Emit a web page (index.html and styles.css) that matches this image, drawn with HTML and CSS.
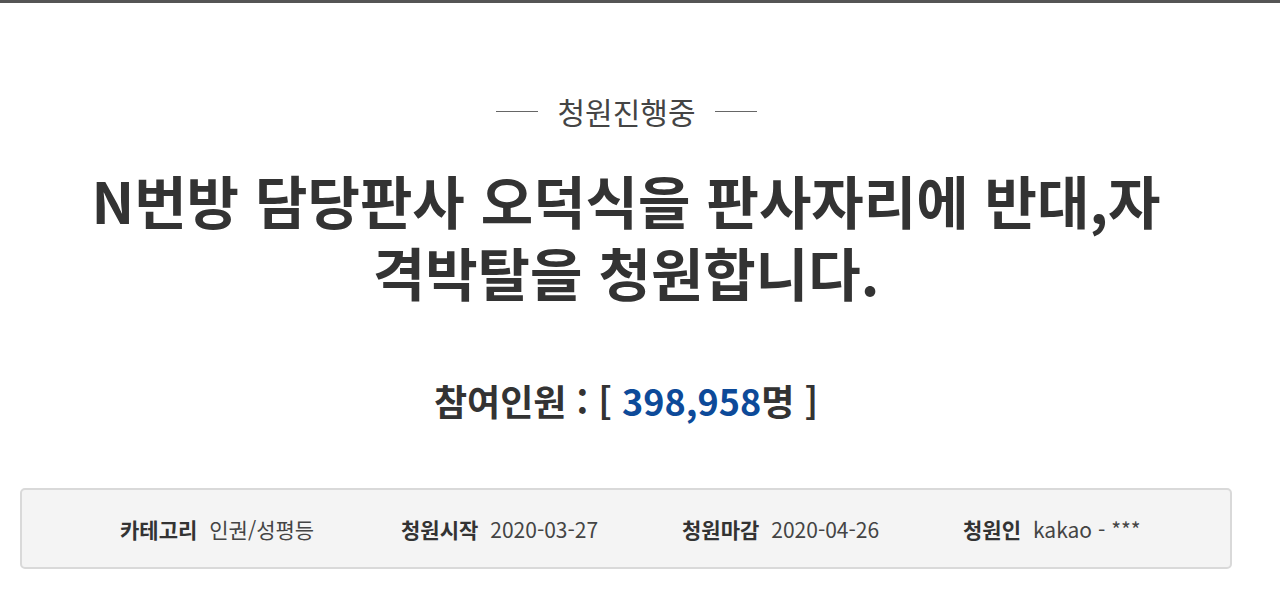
FILE: index.html
```html
<!DOCTYPE html>
<html lang="ko">
<head>
<meta charset="utf-8">
<link rel="stylesheet" href="styles.css">
</head>
<body>
<div class="topbar"></div>
<div class="page">
  <div class="status"><span class="line"></span><span class="status-text">청원진행중</span><span class="line"></span></div>
  <h1 class="title">N번방 담당판사 오덕식을 판사자리에 반대,자격박탈을 청원합니다.</h1>
  <h2 class="count">참여인원 : [ <span class="num">398,958</span>명 ]</h2>
  <ul class="info">
    <li class="item item-1"><strong>카테고리</strong>인권/성평등</li>
    <li class="item item-2"><strong>청원시작</strong>2020-03-27</li>
    <li class="item item-3"><strong>청원마감</strong>2020-04-26</li>
    <li class="item item-4"><strong>청원인</strong>kakao - ***</li>
  </ul>
</div>
</body>
</html>
```
FILE: styles.css
```css
html, body {
  margin: 0;
  padding: 0;
  background: #ffffff;
}
body {
  font-family: "Noto Sans CJK KR", "Noto Sans", sans-serif;
  color: #333333;
  width: 1280px;
  height: 601px;
  overflow: hidden;
}
.topbar {
  height: 3px;
  background: #555555;
}
.page {
  width: 1212px;
  padding: 0 20px;
}
.status {
  display: flex;
  justify-content: center;
  align-items: center;
  margin-top: 88px;
  height: 40px;
}
.line {
  display: block;
  width: 42px;
  height: 1px;
  background: #666666;
}
.status-text {
  font-size: 30px;
  color: #444444;
  margin: 0 19px 0 20px;
  line-height: 40px;
  letter-spacing: 0;
}
.title {
  width: 1090px;
  margin: 32px auto 0;
  text-align: center;
  font-size: 57px;
  font-weight: 700;
  line-height: 72px;
  color: #333333;
  letter-spacing: 0;
}
.count {
  margin: 68px 0 0;
  text-align: center;
  font-size: 36px;
  font-weight: 700;
  line-height: 50px;
  color: #333333;
}
.num {
  color: #0d4a99;
}
.info {
  list-style: none;
  margin: 63px 0 0;
  padding: 0 0 0 98px;
  display: flex;
  align-items: center;
  background: #f4f4f4;
  border: 2px solid #d9d9d9;
  border-radius: 5px;
  box-sizing: border-box;
  height: 81px;
}
.item {
  font-size: 21px;
  color: #444444;
  width: 281px;
  letter-spacing: 0;
}
.item-4 {
  width: auto;
}
.item strong {
  color: #333333;
  font-weight: 700;
  margin-right: 12px;
}
```
